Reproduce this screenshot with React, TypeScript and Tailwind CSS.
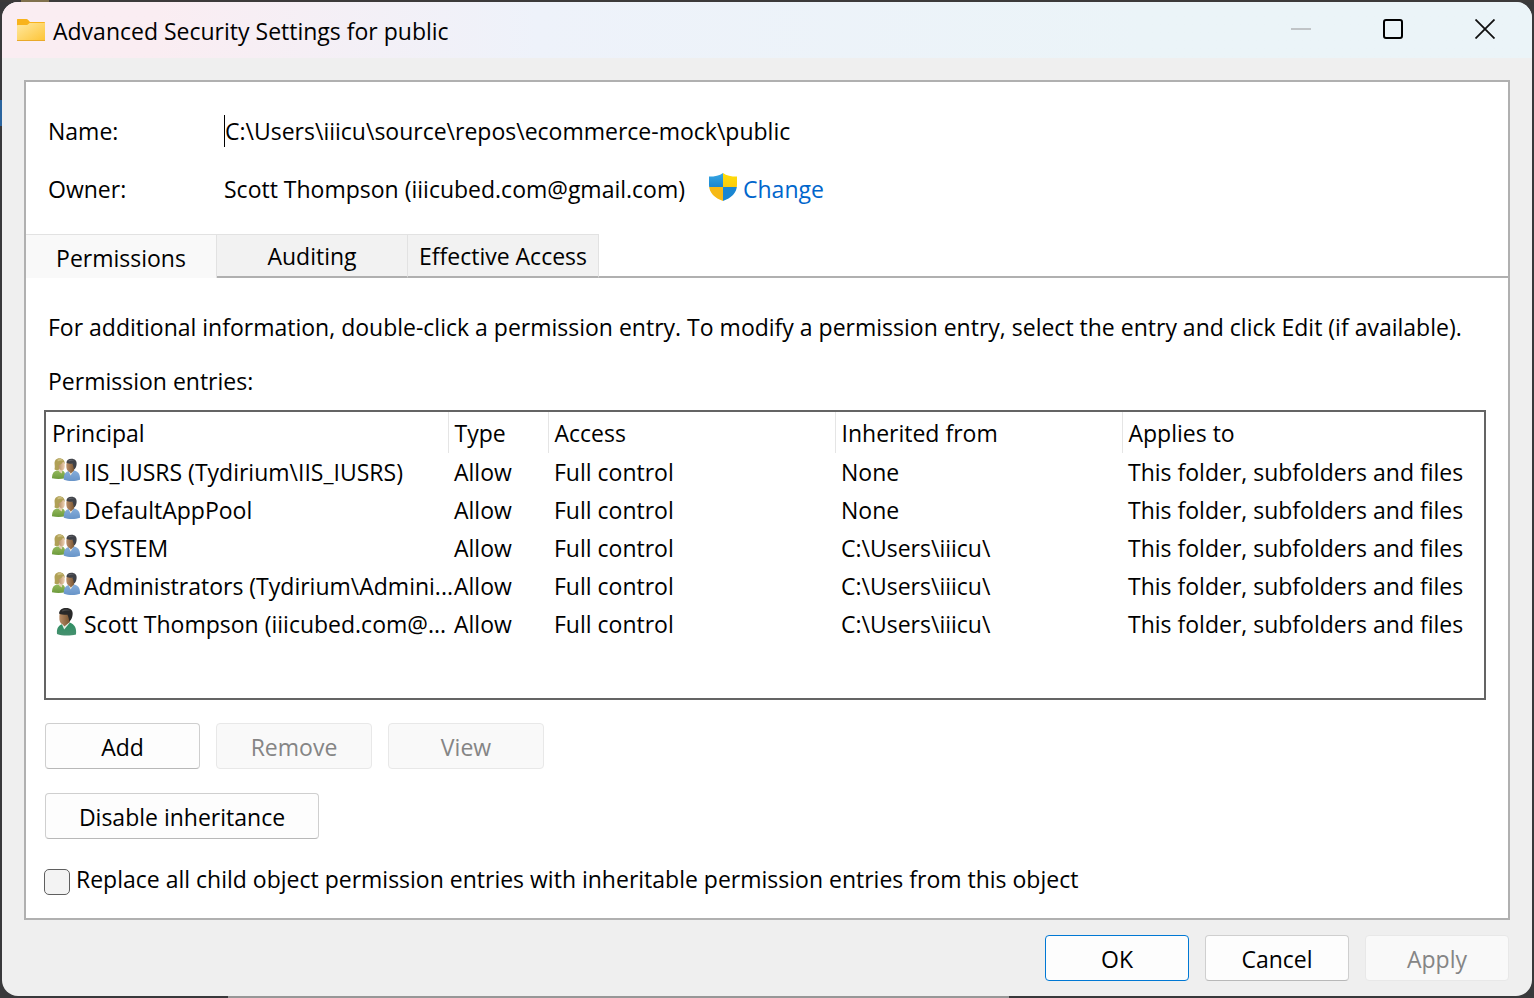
import { useState } from "react";

type Entry = {
  kind: "group" | "user";
  principal: string;
  type: string;
  access: string;
  inherited: string;
  applies: string;
};

const SCOPE = "This folder, subfolders and files";

const entries: Entry[] = [
  { kind: "group", principal: "IIS_IUSRS (Tydirium\\IIS_IUSRS)", type: "Allow", access: "Full control", inherited: "None", applies: SCOPE },
  { kind: "group", principal: "DefaultAppPool", type: "Allow", access: "Full control", inherited: "None", applies: SCOPE },
  { kind: "group", principal: "SYSTEM", type: "Allow", access: "Full control", inherited: "C:\\Users\\iiicu\\", applies: SCOPE },
  { kind: "group", principal: "Administrators (Tydirium\\Admini...", type: "Allow", access: "Full control", inherited: "C:\\Users\\iiicu\\", applies: SCOPE },
  { kind: "user", principal: "Scott Thompson (iiicubed.com@...", type: "Allow", access: "Full control", inherited: "C:\\Users\\iiicu\\", applies: SCOPE },
];

const columns = ["Principal", "Type", "Access", "Inherited from", "Applies to"];
const tabs = ["Permissions", "Auditing", "Effective Access"];

function Gradients() {
  return (
    <svg width="0" height="0" aria-hidden="true" className="absolute">
      <defs>
        <linearGradient id="folder" x1="0" y1="0" x2="1" y2="1">
          <stop offset="0" stopColor="#ffe8a0" />
          <stop offset="1" stopColor="#fdc435" />
        </linearGradient>
        <linearGradient id="shieldBlue" x1="0" y1="0" x2="0" y2="1">
          <stop offset="0" stopColor="#38a8e4" />
          <stop offset="1" stopColor="#1a86d0" />
        </linearGradient>
        <linearGradient id="shieldGold" x1="0" y1="0" x2="0" y2="1">
          <stop offset="0" stopColor="#ffdf0a" />
          <stop offset="1" stopColor="#fccb0c" />
        </linearGradient>
        <linearGradient id="greenTop" x1="0" y1="0" x2="0" y2="1">
          <stop offset="0" stopColor="#93b95c" />
          <stop offset="1" stopColor="#6d9a3c" />
        </linearGradient>
        <linearGradient id="blueTop" x1="0" y1="0" x2="0" y2="1">
          <stop offset="0" stopColor="#86aedb" />
          <stop offset="1" stopColor="#6894c8" />
        </linearGradient>
        <linearGradient id="scrubs" x1="0" y1="0" x2="0" y2="1">
          <stop offset="0" stopColor="#2f8f63" />
          <stop offset="1" stopColor="#46906f" />
        </linearGradient>
        <linearGradient id="skin" x1="0" y1="0" x2="1" y2="0">
          <stop offset="0" stopColor="#b98e68" />
          <stop offset="1" stopColor="#77532f" />
        </linearGradient>
        <linearGradient id="fairSkin" x1="0" y1="0" x2="1" y2="0">
          <stop offset="0" stopColor="#b58f68" />
          <stop offset="1" stopColor="#f0d3b4" />
        </linearGradient>
      </defs>
    </svg>
  );
}

function FolderIcon() {
  return (
    <svg width="28" height="24" viewBox="0 0 28 24" aria-hidden="true" className="shrink-0">
      <path d="M0 1.5Q0 1 .6 1H9.4Q10.4 1 11 1.8L13 4H27.3Q28 4 28 4.7V12H0Z" fill="#f8b31c" />
      <path d="M0 7.6Q0 7 .6 7H9.4Q10.2 7 10.8 6.5L12.6 5H28V22.4Q28 23 27.4 23H.6Q0 23 0 22.4Z" fill="url(#folder)" />
      <path d="M0 22H28V22.4Q28 23 27.4 23H.6Q0 23 0 22.4Z" fill="#e9a92a" />
    </svg>
  );
}

function ShieldIcon() {
  return (
    <svg width="28" height="28" viewBox="0 0 28 28" aria-hidden="true" className="-mt-1 shrink-0">
      <defs>
        <clipPath id="shield">
          <path d="M14 0C17.5 2.6 22 3.6 28 3.6V12C28 20 22 25.3 14 28C6 25.3 0 20 0 12V3.6C6 3.6 10.5 2.6 14 0Z" />
        </clipPath>
      </defs>
      <g clipPath="url(#shield)">
        <rect width="14" height="14" fill="url(#shieldBlue)" />
        <rect x="14" width="14" height="14" fill="url(#shieldGold)" />
        <rect y="14" width="14" height="14" fill="#f6b915" />
        <rect x="14" y="14" width="14" height="14" fill="#1a86d2" />
      </g>
    </svg>
  );
}

function GroupIcon() {
  return (
    <svg width="28" height="24" viewBox="0 0 28 24" aria-hidden="true" className="-mt-1 shrink-0">
      <path d="M0 20.2C-.2 15.8 1.6 13.4 5 12.6L10.4 12.6C12.6 13.4 13.4 15.4 13.2 20.2C9 21.2 4 21.2 0 20.2Z" fill="url(#greenTop)" />
      <path d="M6.2 10.4L10.2 12.4L10 15.4L7.4 14Z" fill="#e6d2b8" />
      <path d="M2.6 6.2C2.2 2.6 4.2 .3 7.4 .3C10.6 .3 12.8 2.4 12.7 5.4L9 8.4L6.8 11.8C5.2 12.6 3.6 12.4 2.4 11.2C3 9.8 2.8 8 2.6 6.2Z" fill="#b0a056" />
      <path d="M5.4 1.6C7.4 .6 10 .9 11.4 2.6C9.6 2.4 7.4 2.6 5.8 3.6Z" fill="#cdc082" />
      <path d="M6.6 7.2C8.6 6.8 10.2 5.4 10.9 3.8C12.4 4.8 12.9 6.2 12.8 8.2C12.7 10.6 11.6 12.5 9.8 12.5C7.8 12.3 6.6 10.2 6.6 7.2Z" fill="url(#fairSkin)" />
      <path d="M11.8 21.8C11.4 16.4 13.6 13.8 17 13L22.4 12.4C26.4 13.6 28.2 16 28 21.8C23.4 23.4 16.6 23.4 11.8 21.8Z" fill="url(#blueTop)" />
      <path d="M16.6 13L18.6 17.4L21.6 12.8Z" fill="#f2ead9" />
      <path d="M14.6 5C14.2 6.4 14.3 8.4 14.5 10C14.9 12 16 13.4 17.6 14L18.8 15.4L22 12.4L22.6 7L18.6 4.4Z" fill="url(#skin)" />
      <path d="M14.4 4.8C14.6 2.2 16.6 .8 19.4 .8C23 .8 25 3 24.6 6.2C24.4 8.6 23.5 10.4 22 11.6C21.5 9.8 21.3 7.4 20.4 5.8C18.4 6 16 5.6 14.4 4.8Z" fill="#3f4147" />
      <path d="M16.4 2.6C18.2 1.3 21 1.3 22.6 2.8C20.6 2.4 18.6 2.6 17 3.4Z" fill="#62646b" />
    </svg>
  );
}

function UserIcon() {
  return (
    <svg width="28" height="28" viewBox="0 0 28 28" aria-hidden="true" className="-mt-1 shrink-0">
      <path d="M5 26C4.4 20.4 6.4 17.4 10 16.2L17.6 14.6C22.8 16.6 24.6 20 24 26.4C18.4 28 10 28 5 26Z" fill="url(#scrubs)" />
      <path d="M9.8 16L12.2 21.4L18 14.6Z" fill="#e8efe8" />
      <path d="M7.6 5.4C7.4 7.4 7.2 9.4 7.4 11.6C7.7 14.2 9 16 10.8 16.4L12.4 18.4L17.8 14L18 8L13 4.6Z" fill="url(#skin)" />
      <path d="M7 5.4C7.6 1.8 10.2 .1 14 .1C18.8 .1 21.2 2.8 20.6 6.8C20.2 10 19.2 12.2 17.4 13.6C16.8 11.4 16.6 8.8 15.4 6.8C12.6 7 9.2 6.6 7 5.4Z" fill="#292929" />
      <path d="M9.8 2.6C12 1 16 .9 18.2 2.8C15.6 2.3 12.8 2.5 10.4 3.6Z" fill="#4b4b4b" />
    </svg>
  );
}

type PushButtonProps = { label: string; width: string; disabled?: boolean; primary?: boolean };

function PushButton({ label, width, disabled, primary }: PushButtonProps) {
  const tone = disabled
    ? "border-[#e8e8e8] bg-[#f9f9f9] text-[#858585]"
    : primary
      ? "border-[#0078d4] bg-[#fdfdfd]"
      : "border-[#cfcfcf] border-b-[#b8b8b8] bg-[#fdfdfd]";
  return (
    <button type="button" disabled={disabled} className={`flex h-[46px] items-center justify-center rounded border pt-0.5 ${width} ${tone}`}>
      {label}
    </button>
  );
}

export default function App() {
  const [active, setActive] = useState("Permissions");
  const [replace, setReplace] = useState(false);

  return (
    <div className="relative flex min-h-screen flex-col bg-[#39393b] p-[2px] font-['Open_Sans','Noto_Sans',sans-serif] text-[23px] leading-8 text-black">
      <Gradients />
      <div aria-hidden="true" className="absolute inset-x-0 top-0 h-[2px] bg-[#3c3a3a]" />
      <div aria-hidden="true" className="absolute top-0 left-[21px] h-[2px] w-7 bg-[#80714d]" />
      <div aria-hidden="true" className="absolute top-[100px] left-0 h-[26px] w-[2px] bg-[#2a649e]" />
      <div aria-hidden="true" className="absolute bottom-0 left-[228px] h-[2px] w-[781px] bg-[#979797]" />

      <main className="relative flex flex-1 flex-col overflow-hidden rounded-2xl bg-[#efefef]">
        <header className="flex h-14 items-center justify-between bg-linear-to-r from-[#faedf2] from-10% via-[#eef2fa] via-35% to-[#ebf4f8] to-75% pr-px pl-[15px]">
          <div className="flex items-center gap-2">
            <FolderIcon />
            <h1 className="pt-0.5">Advanced Security Settings for public</h1>
          </div>
          <div className="flex self-stretch pb-0.5">
            <button type="button" aria-label="Minimize" disabled className="flex w-[92px] items-center justify-center">
              <svg width="20" height="20" viewBox="0 0 20 20" aria-hidden="true"><path d="M0 10H20" stroke="#c0c4c7" strokeWidth="2" /></svg>
            </button>
            <button type="button" aria-label="Maximize" className="flex w-[92px] items-center justify-center">
              <svg width="20" height="20" viewBox="0 0 20 20" aria-hidden="true"><rect x="1" y="1" width="18" height="18" rx="2" fill="none" stroke="#000" strokeWidth="2" /></svg>
            </button>
            <button type="button" aria-label="Close" className="flex w-[92px] items-center justify-center">
              <svg width="20" height="20" viewBox="0 0 20 20" aria-hidden="true"><path d="M.5 .5L19.5 19.5M19.5 .5L.5 19.5" stroke="#111" strokeWidth="1.8" /></svg>
            </button>
          </div>
        </header>

        <section className="mx-[22px] mt-[22px] flex flex-1 flex-col border-2 border-[#b0b0b0] bg-white">
          <div className="flex flex-col gap-[26px] px-[22px] pt-[33px] pb-[29px]">
            <div className="flex items-center">
              <label htmlFor="name" className="w-44">Name:</label>
              <input id="name" readOnly defaultValue={"C:\\Users\\iiicu\\source\\repos\\ecommerce-mock\\public"} className="h-8 flex-1 border-l border-black bg-transparent outline-none" />
            </div>
            <div className="flex items-center">
              <span className="w-44">Owner:</span>
              <span>Scott Thompson (iiicubed.com@gmail.com)</span>
              <a href="#change" className="ml-6 flex items-center gap-1.5 text-[#0066cc]">
                <ShieldIcon />
                Change
              </a>
            </div>
          </div>

          <div role="tablist" className="flex h-11">
            {tabs.map((tab) => (
              <button
                key={tab}
                type="button"
                role="tab"
                aria-selected={active === tab}
                onClick={() => setActive(tab)}
                className={`w-[191px] border-t border-r border-[#e2e2e2] whitespace-nowrap ${active === tab ? "bg-[#f9f9f9] pt-0.5" : "border-b-2 border-b-[#b0b0b0] bg-[#f2f2f2]"}`}
              >
                {tab}
              </button>
            ))}
            <div className="flex-1 border-b-2 border-[#b0b0b0]" />
          </div>

          <div className="flex flex-col pt-[33px] pr-[22px] pb-[23px] pl-[18px]">
            <p className="pl-1">
              For additional information, double-click a permission entry. To modify a permission entry, select the entry and click Edit (if available).
            </p>
            <h2 id="entries" className="mt-[22px] pl-1">Permission entries:</h2>

            <div className="mt-[13px] h-[290px] overflow-hidden border-2 border-[#646464]">
              <table aria-labelledby="entries" className="w-full table-fixed border-collapse text-left whitespace-nowrap">
                <colgroup>
                  <col className="w-[402px]" />
                  <col className="w-[100px]" />
                  <col className="w-[287px]" />
                  <col className="w-[287px]" />
                  <col />
                </colgroup>
                <thead>
                  <tr className="h-[41px]">
                    {columns.map((column) => (
                      <th key={column} scope="col" className="border-r border-[#e5e5e5] py-0 pl-1.5 font-normal last:border-r-0">
                        {column}
                      </th>
                    ))}
                  </tr>
                </thead>
                <tbody>
                  {entries.map((entry) => (
                    <tr key={entry.principal} className="h-[38px]">
                      <td className="p-0 pl-1.5">
                        <div className="flex items-center gap-1">
                          {entry.kind === "group" ? <GroupIcon /> : <UserIcon />}
                          {entry.principal}
                        </div>
                      </td>
                      <td className="p-0 pl-1.5">{entry.type}</td>
                      <td className="p-0 pl-1.5">{entry.access}</td>
                      <td className="p-0 pl-1.5">{entry.inherited}</td>
                      <td className="p-0 pl-1.5">{entry.applies}</td>
                    </tr>
                  ))}
                </tbody>
              </table>
            </div>

            <div className="mt-[23px] flex gap-4 pl-px">
              <PushButton label="Add" width="w-[155px]" />
              <PushButton label="Remove" width="w-[156px]" disabled />
              <PushButton label="View" width="w-[156px]" disabled />
            </div>
            <div className="mt-6 flex pl-px">
              <PushButton label="Disable inheritance" width="w-[274px]" />
            </div>
            <div className="mt-6 flex items-end gap-1.5">
              <input
                id="replace"
                type="checkbox"
                checked={replace}
                onChange={(event) => setReplace(event.target.checked)}
                className="size-[26px] appearance-none rounded-[5px] border border-[#5f5f5f] bg-[#f3f3f3] checked:bg-[#0067c0]"
              />
              <label htmlFor="replace">Replace all child object permission entries with inheritable permission entries from this object</label>
            </div>
          </div>
        </section>

        <footer className="flex justify-end gap-4 px-[23px] py-[15px]">
          <PushButton label="OK" width="w-36" primary />
          <PushButton label="Cancel" width="w-36" />
          <PushButton label="Apply" width="w-36" disabled />
        </footer>
      </main>
    </div>
  );
}
